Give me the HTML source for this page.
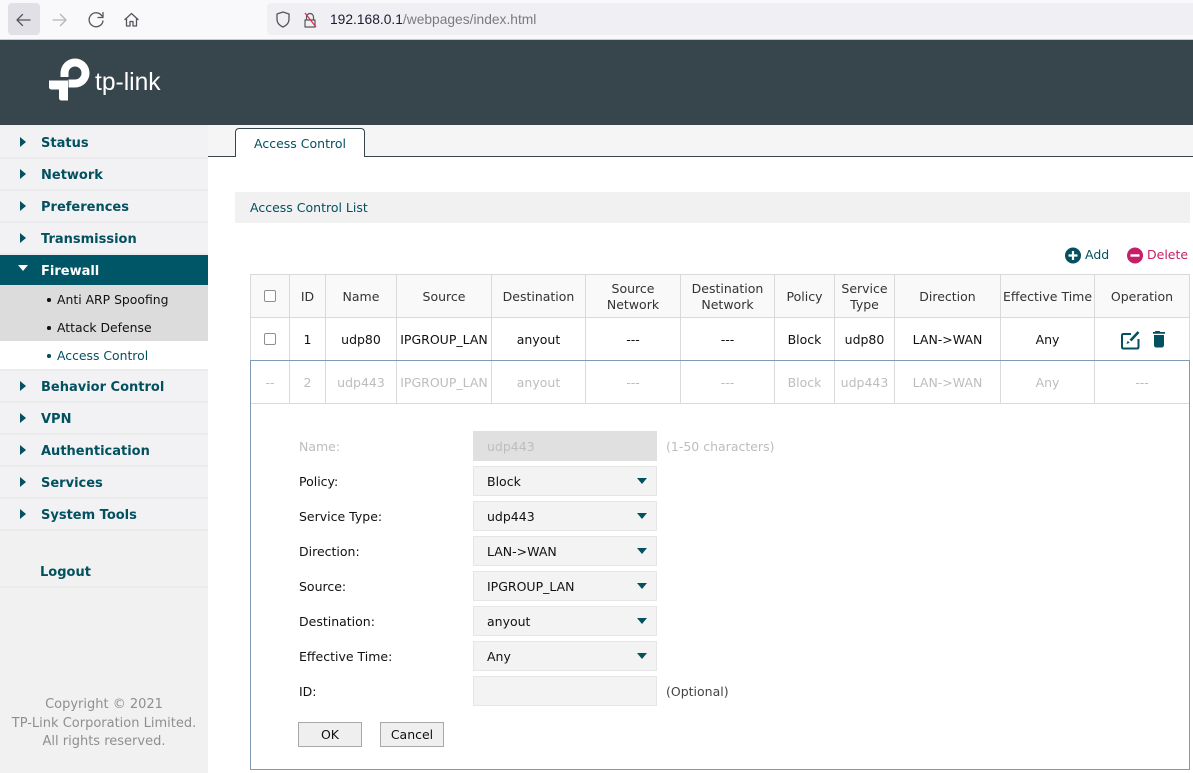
<!DOCTYPE html>
<html><head><meta charset="utf-8"><title>Access Control</title>
<style>
*{box-sizing:border-box}
html,body{margin:0;padding:0;width:1193px;height:773px;overflow:hidden;background:#fff;font-family:"DejaVu Sans","Liberation Sans",sans-serif;font-size:12.5px;color:#111}
.a{position:absolute;white-space:nowrap}
#bar{left:0;top:0;width:1193px;height:40px;background:#f9f9fb;border-bottom:1px solid #c9cbcd}
#head{left:0;top:40px;width:1193px;height:85px;background:#37454c}
#side{left:0;top:125px;width:208px;height:648px;background:#f1f1f1}
.m{left:0;width:208px;height:32px;background:#f2f2f4;border-bottom:2px solid #ebebeb}
.mt{left:41px;font-weight:bold;font-size:13px;color:#03505f;line-height:16px}
.tri{left:20px;width:0;height:0;border-left:6px solid #03505f;border-top:5px solid transparent;border-bottom:5px solid transparent}
.sub{left:57px;color:#111;line-height:16px;font-size:12.4px}
.dot{left:47px;width:3.500px;height:3.500px;border-radius:50%;background:#111}
.copy{left:0;width:208px;text-align:center;color:#8f8f8f;line-height:18px;font-size:13px}
table{border-collapse:collapse;table-layout:fixed;position:absolute;left:250px;top:274px;width:940px}
td{border:1px solid #d9d9d9;height:43px;text-align:center;padding:2px 0 0;line-height:16px;overflow:visible;white-space:nowrap}
tr.h td{background:#f9f9f9;color:#333}
tr.g td{color:#bdbdbd}
.cb{display:inline-block;width:12px;height:12px;border:1px solid #8f8f8f;border-radius:2px;background:#fff;vertical-align:middle;position:relative;top:-2px}
.lb{left:299px;line-height:16px}
.fld{left:473px;width:184px;height:30px;background:#f3f3f3;border:1px solid #e6e6e6;line-height:30px;padding-left:13px}
.fld i{position:absolute;left:163px;top:11px;width:0;height:0;border-top:6px solid #03505f;border-left:5.500px solid transparent;border-right:5.500px solid transparent}
.btn{top:722px;height:25px;background:#efefef;border:1px solid #a8a8a8;text-align:center;line-height:23px}
</style></head><body>

<div class="a" id="bar"></div>
<div class="a" style="left:8px;top:3px;width:32px;height:32px;background:#e0e0e6;border-radius:4px"></div>
<svg class="a" style="left:0;top:0" width="150" height="40" fill="none" stroke-linecap="round" stroke-linejoin="round">
<path d="M30 20H17M22.500 14.500L17 20l5.500 5.500" stroke="#55555c" stroke-width="1.300"/>
<path d="M53 20h13M60.500 14.500L66 20l-5.500 5.500" stroke="#b5b5ba" stroke-width="1.300"/>
<path d="M102 16a7 7 0 1 0 1 5M103 12.500v5h-5" stroke="#55555c" stroke-width="1.300"/>
<path d="M125 19.500l6.500-6 6.500 6M126.500 18.500V26h3.500v-4.500h3V26h3.500v-7.500" stroke="#55555c" stroke-width="1.300"/>
</svg>
<div class="a" style="left:267px;top:3px;width:926px;height:32px;background:#f0f0f4;border-radius:4px 0 0 4px"></div>
<svg class="a" style="left:270px;top:5px" width="60" height="30" fill="none" stroke-linejoin="round">
<path d="M13 7l6 2v5c0 4-2.500 6.500-6 8-3.500-1.500-6-4-6-8V9z" stroke="#55555c" stroke-width="1.300"/>
<path d="M36.500 15v-3a3.500 3.500 0 0 1 7 0v3M35 15h10v7H35z" stroke="#55555c" stroke-width="1.200"/>
<path d="M35 8l11 14" stroke="#e5294f" stroke-width="1.300"/>
</svg>
<div class="a" style="left:330px;top:12px;font-family:'Liberation Sans',sans-serif;font-size:13.8px;line-height:16px;color:#7a7a80"><span style="color:#1d1b33">192.168.0.1</span>/webpages/index.html</div>

<div class="a" id="head"></div>
<svg class="a" style="left:48px;top:58px" width="45" height="44" fill="#fff">
<path d="M12.500 19V15A14.500 14.500 0 1 1 27 29.500H20.500V21.500H27A6.500 6.500 0 1 0 20.500 15V19Z"/>
<path d="M1 22.500H20V42.500H14C12 42.500 11 41.500 11 40V31.500H4C2 31.500 1 30.500 1 29Z"/>
</svg>
<div class="a" style="left:95px;top:69px;font-family:'Liberation Sans',sans-serif;font-size:24.6px;line-height:28px;color:#fff">tp-link</div>

<div class="a" id="side"></div>
<div class="a m" style="top:127px"></div><div class="a m" style="top:159px"></div><div class="a m" style="top:191px"></div><div class="a m" style="top:223px"></div>
<div class="a" style="left:0;top:255px;width:208px;height:30px;background:#005566"></div>
<div class="a" style="left:0;top:285px;width:208px;height:56px;background:#dcdcdc"></div>
<div class="a" style="left:0;top:341px;width:208px;height:28px;background:#fff"></div>
<div class="a" style="left:0;top:369px;width:208px;height:2px;background:#ebebeb"></div>
<div class="a m" style="top:371px"></div><div class="a m" style="top:403px"></div><div class="a m" style="top:435px"></div><div class="a m" style="top:467px"></div><div class="a m" style="top:499px"></div>
<div class="a" style="left:0;top:586px;width:208px;height:2px;background:#ebebeb"></div>

<div class="a tri" style="top:137px"></div><div class="a mt" style="top:136px">Status</div>
<div class="a tri" style="top:169px"></div><div class="a mt" style="top:168px">Network</div>
<div class="a tri" style="top:201px"></div><div class="a mt" style="top:200px">Preferences</div>
<div class="a tri" style="top:233px"></div><div class="a mt" style="top:232px">Transmission</div>
<div class="a" style="left:18px;top:265px;width:0;height:0;border-top:6px solid #fff;border-left:5.500px solid transparent;border-right:5.500px solid transparent"></div>
<div class="a mt" style="top:264px;color:#fff">Firewall</div>
<div class="a dot" style="top:298px"></div><div class="a sub" style="top:292px">Anti ARP Spoofing</div>
<div class="a dot" style="top:326px"></div><div class="a sub" style="top:320px">Attack Defense</div>
<div class="a dot" style="top:354px;background:#03505f"></div><div class="a sub" style="top:348px;color:#03505f">Access Control</div>
<div class="a tri" style="top:381px"></div><div class="a mt" style="top:380px">Behavior Control</div>
<div class="a tri" style="top:413px"></div><div class="a mt" style="top:412px">VPN</div>
<div class="a tri" style="top:445px"></div><div class="a mt" style="top:444px">Authentication</div>
<div class="a tri" style="top:477px"></div><div class="a mt" style="top:476px">Services</div>
<div class="a tri" style="top:509px"></div><div class="a mt" style="top:508px">System Tools</div>
<div class="a mt" style="left:40px;top:565px">Logout</div>
<div class="a copy" style="top:696px">Copyright © 2021</div>
<div class="a copy" style="top:715px">TP-Link Corporation Limited.</div>
<div class="a copy" style="top:733px">All rights reserved.</div>

<div class="a" style="left:208px;top:125px;width:985px;height:31px;background:#f5f5f5"></div>
<div class="a" style="left:208px;top:156px;width:985px;height:1px;background:#37454c"></div>
<div class="a" style="left:235px;top:128px;width:130px;height:29px;background:#fff;border:1px solid #37454c;border-bottom:0;border-radius:4px 4px 0 0;text-align:center;line-height:29px;color:#03505f">Access Control</div>

<div class="a" style="left:235px;top:192px;width:955px;height:31px;background:#f1f1f1;padding-left:15px;line-height:31px;color:#03505f">Access Control List</div>

<svg class="a" style="left:1064px;top:247px" width="18" height="18"><circle cx="9" cy="8.500" r="8" fill="#03505f"/><path d="M4.500 8.500h9M9 4v9" stroke="#fff" stroke-width="2.200"/></svg>
<div class="a" style="left:1085px;top:247px;line-height:16px;color:#03505f">Add</div>
<svg class="a" style="left:1126px;top:247px" width="18" height="18"><circle cx="9" cy="8.500" r="8" fill="#c51f67"/><path d="M4.500 8.500h9" stroke="#fff" stroke-width="2.400"/></svg>
<div class="a" style="left:1147px;top:247px;line-height:16px;color:#c51f67">Delete</div>

<table>
<colgroup><col style="width:39px"><col style="width:36px"><col style="width:71px"><col style="width:95px"><col style="width:94px"><col style="width:95px"><col style="width:94px"><col style="width:60px"><col style="width:60px"><col style="width:106px"><col style="width:94px"><col style="width:95px"></colgroup>
<tr class="h"><td><span class="cb"></span></td><td>ID</td><td>Name</td><td>Source</td><td>Destination</td><td>Source<br>Network</td><td>Destination<br>Network</td><td>Policy</td><td>Service<br>Type</td><td>Direction</td><td>Effective Time</td><td>Operation</td></tr>
<tr><td><span class="cb"></span></td><td>1</td><td>udp80</td><td>IPGROUP_LAN</td><td>anyout</td><td>---</td><td>---</td><td>Block</td><td>udp80</td><td>LAN-&gt;WAN</td><td>Any</td><td></td></tr>
<tr class="g"><td>--</td><td>2</td><td>udp443</td><td>IPGROUP_LAN</td><td>anyout</td><td>---</td><td>---</td><td>Block</td><td>udp443</td><td>LAN-&gt;WAN</td><td>Any</td><td>---</td></tr>
</table>
<div class="a" style="left:250px;top:360px;width:940px;height:410px;border:1px solid #7f9ab5"></div>

<svg class="a" style="left:1120px;top:330px" width="50" height="20" fill="none">
<path d="M11 4H3.500C2.300 4 2 4.800 2 5.500V17c0 1 .5 1.500 1.500 1.500H17c1 0 1.500-.5 1.500-1.500V9" stroke="#03505f" stroke-width="2"/>
<path d="M10.500 10.500L18.500 2" stroke="#03505f" stroke-width="2.600"/>
<path d="M6.500 14l1.200-3.200 2 2z" fill="#03505f"/>
<path d="M35.500 1h4l.8 1H45v1.800H33V2h1.700zM34 5h10v10c0 1.500-1 2.500-2.500 2.500h-5C35 17.500 34 16.500 34 15z" fill="#03505f"/>
</svg>

<div class="a lb" style="top:439px;color:#bdbdbd">Name:</div>
<div class="a fld" style="top:431px;background:#e0e0e0;border-color:#e0e0e0;color:#bdbdbd">udp443</div>
<div class="a" style="left:666px;top:439px;line-height:16px;color:#bdbdbd">(1-50 characters)</div>
<div class="a lb" style="top:474px">Policy:</div><div class="a fld" style="top:466px">Block<i></i></div>
<div class="a lb" style="top:509px">Service Type:</div><div class="a fld" style="top:501px">udp443<i></i></div>
<div class="a lb" style="top:544px">Direction:</div><div class="a fld" style="top:536px">LAN-&gt;WAN<i></i></div>
<div class="a lb" style="top:579px">Source:</div><div class="a fld" style="top:571px">IPGROUP_LAN<i></i></div>
<div class="a lb" style="top:614px">Destination:</div><div class="a fld" style="top:606px">anyout<i></i></div>
<div class="a lb" style="top:649px">Effective Time:</div><div class="a fld" style="top:641px">Any<i></i></div>
<div class="a lb" style="top:684px">ID:</div><div class="a fld" style="top:676px"></div>
<div class="a" style="left:666px;top:684px;line-height:16px;color:#444">(Optional)</div>
<div class="a btn" style="left:298px;width:64px">OK</div>
<div class="a btn" style="left:380px;width:64px">Cancel</div>
</body></html>
